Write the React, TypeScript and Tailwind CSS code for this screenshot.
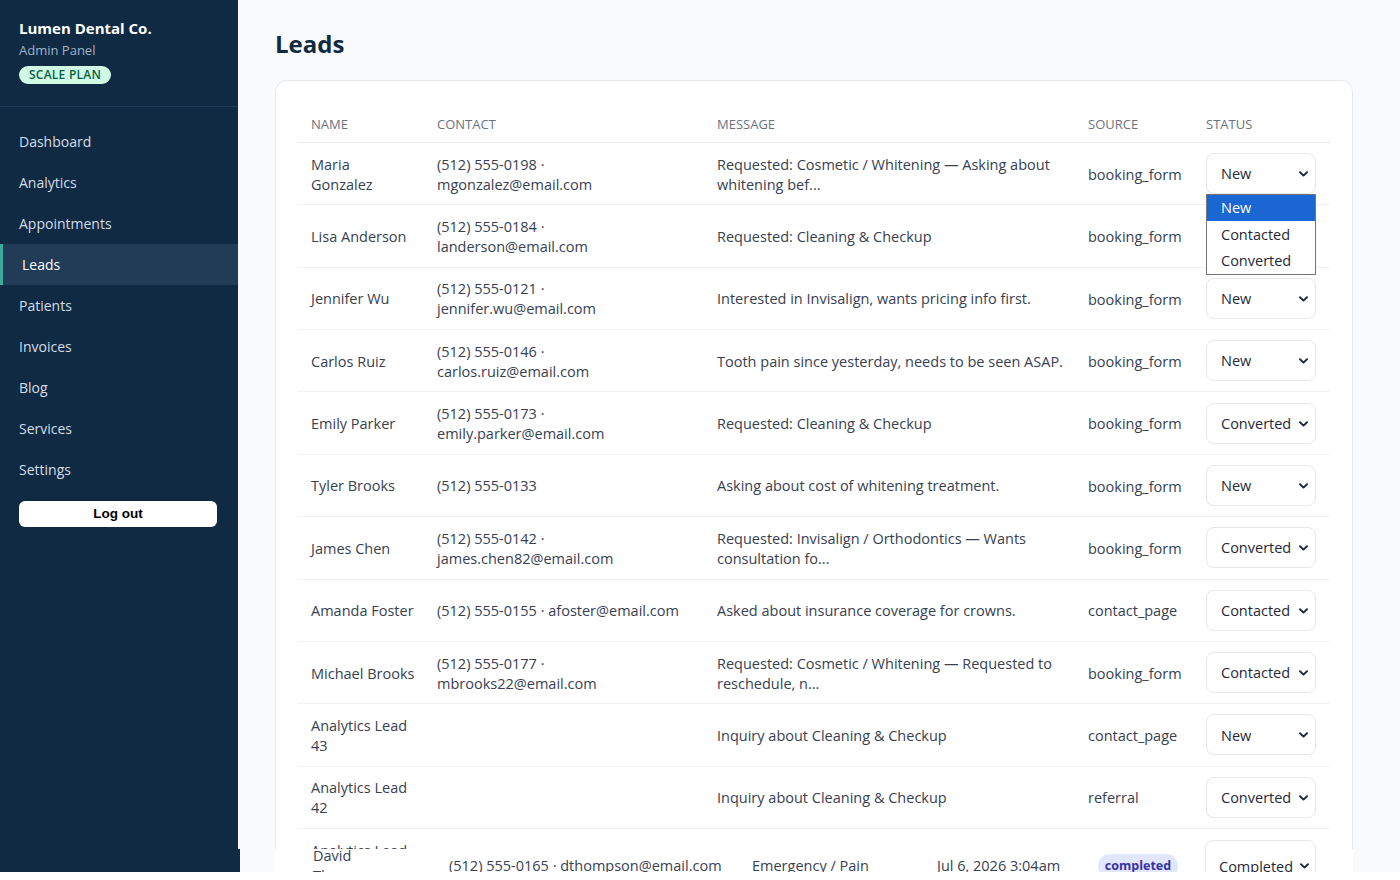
import React from "react";

type Row = {
  name: string[];
  contact: string[];
  msg: string[];
  source: string;
  status: string;
};

const rows: Row[] = [
  { name: ["Maria", "Gonzalez"], contact: ["(512) 555-0198 ·", "mgonzalez@email.com"], msg: ["Requested: Cosmetic / Whitening — Asking about", "whitening bef..."], source: "booking_form", status: "New" },
  { name: ["Lisa Anderson"], contact: ["(512) 555-0184 ·", "landerson@email.com"], msg: ["Requested: Cleaning & Checkup"], source: "booking_form", status: "New" },
  { name: ["Jennifer Wu"], contact: ["(512) 555-0121 ·", "jennifer.wu@email.com"], msg: ["Interested in Invisalign, wants pricing info first."], source: "booking_form", status: "New" },
  { name: ["Carlos Ruiz"], contact: ["(512) 555-0146 ·", "carlos.ruiz@email.com"], msg: ["Tooth pain since yesterday, needs to be seen ASAP."], source: "booking_form", status: "New" },
  { name: ["Emily Parker"], contact: ["(512) 555-0173 ·", "emily.parker@email.com"], msg: ["Requested: Cleaning & Checkup"], source: "booking_form", status: "Converted" },
  { name: ["Tyler Brooks"], contact: ["(512) 555-0133"], msg: ["Asking about cost of whitening treatment."], source: "booking_form", status: "New" },
  { name: ["James Chen"], contact: ["(512) 555-0142 ·", "james.chen82@email.com"], msg: ["Requested: Invisalign / Orthodontics — Wants", "consultation fo..."], source: "booking_form", status: "Converted" },
  { name: ["Amanda Foster"], contact: ["(512) 555-0155 · afoster@email.com"], msg: ["Asked about insurance coverage for crowns."], source: "contact_page", status: "Contacted" },
  { name: ["Michael Brooks"], contact: ["(512) 555-0177 ·", "mbrooks22@email.com"], msg: ["Requested: Cosmetic / Whitening — Requested to", "reschedule, n..."], source: "booking_form", status: "Contacted" },
  { name: ["Analytics Lead", "43"], contact: [], msg: ["Inquiry about Cleaning & Checkup"], source: "contact_page", status: "New" },
  { name: ["Analytics Lead", "42"], contact: [], msg: ["Inquiry about Cleaning & Checkup"], source: "referral", status: "Converted" },
  { name: ["Analytics Lead", "41"], contact: [], msg: ["Inquiry about Cleaning & Checkup"], source: "contact_page", status: "" },
];

const nav = ["Dashboard", "Analytics", "Appointments", "Leads", "Patients", "Invoices", "Blog", "Services", "Settings"];

function Chevron() {
  return (
    <svg width="9" height="6" viewBox="0 0 9 6" fill="none" className="shrink-0">
      <path d="M1 1.2L4.5 4.6L8 1.2" stroke="#1f2937" strokeWidth="1.9" strokeLinecap="round" strokeLinejoin="round" />
    </svg>
  );
}

function Lines({ lines }: { lines: string[] }) {
  return (
    <div className="flex flex-col">
      {lines.map((l, i) => (
        <span key={i} className="whitespace-nowrap leading-[20px]">
          {l}
        </span>
      ))}
    </div>
  );
}

function StatusSelect({ value }: { value: string }) {
  return (
    <div className="w-[110px] h-[41px] rounded-[8px] border border-[#e5e7eb] bg-white flex items-center justify-between pl-[14px] pr-[7px] pt-[1px] text-[#1f2937]">
      <span>{value}</span>
      <Chevron />
    </div>
  );
}

export default function App() {
  return (
    <div
      className="relative flex w-[1400px] h-[880px] overflow-hidden text-[14.5px]"
      style={{ fontFamily: '"Open Sans", "Noto Sans", sans-serif' }}
    >
      {/* Sidebar */}
      <aside className="w-[238px] shrink-0 bg-[#102a43] flex flex-col">
        <div className="px-[19px] pt-[18px] pb-[21px] border-b border-[#1d3a58]">
          <div className="text-white font-bold text-[15px] leading-[20px]">Lumen Dental Co.</div>
          <div className="mt-[3px] text-[#9fb3c8] text-[13px] leading-[18px]">Admin Panel</div>
          <div className="mt-[7px] inline-flex items-center h-[18px] px-[10px] rounded-full bg-[#d1fae5] text-[#065f46] text-[12px] font-semibold tracking-[0.02em]">
            SCALE PLAN
          </div>
        </div>
        <nav className="pt-[14px] flex flex-col">
          {nav.map((n) =>
            n === "Leads" ? (
              <div key={n} className="h-[41px] flex items-center pl-[19px] border-l-[3px] border-[#3fa9a0] bg-[#223b56] text-white text-[14px]">
                {n}
              </div>
            ) : (
              <div key={n} className="h-[41px] flex items-center pl-[19px] text-[#d4dde8] text-[14px]">
                {n}
              </div>
            )
          )}
        </nav>
        <div className="px-[19px] mt-[11px]">
          <button
            className="w-[198px] h-[26px] rounded-[6px] bg-white text-black font-bold text-[13.5px]"
            style={{ fontFamily: '"Liberation Sans", Arial, sans-serif' }}
          >
            Log out
          </button>
        </div>
      </aside>

      {/* Main */}
      <main className="flex-1 bg-[#f8fafc] pl-[37px] pt-[28px]">
        <h1 className="text-[24px] leading-[32px] font-bold text-[#102a43]">Leads</h1>
        <div className="mt-[20px] w-[1078px] bg-white border border-[#e6e9ee] rounded-[12px] px-[22px] pt-[24px] pb-[24px]">
          <div className="grid grid-cols-[126px_280px_371px_118px_137px] h-[38px] items-center pt-[2px] border-b border-[#e5e7eb] text-[13px] text-[#6b7280] font-medium uppercase">
            <div className="px-[13px]">Name</div>
            <div className="px-[13px]">Contact</div>
            <div className="px-[13px]">Message</div>
            <div className="px-[13px]">Source</div>
            <div className="px-[13px]">Status</div>
          </div>
          {rows.map((r, i) => (
            <div
              key={i}
              className="grid grid-cols-[126px_280px_371px_118px_137px] h-[62.36px] items-center border-b border-[#eef0f3] text-[#374151]"
            >
              <div className="px-[13px] pt-[2px]">
                <Lines lines={r.name} />
              </div>
              <div className="px-[13px] pt-[2px]">
                <Lines lines={r.contact} />
              </div>
              <div className="px-[13px] pt-[2px]">
                <Lines lines={r.msg} />
              </div>
              <div className="px-[13px] pt-[2px] whitespace-nowrap">{r.source}</div>
              <div className="px-[13px]">{r.status && <StatusSelect value={r.status} />}</div>
            </div>
          ))}
        </div>
      </main>

      {/* Open dropdown list */}
      <div className="absolute left-[1206px] top-[194px] w-[110px] border border-[#767676] bg-white text-[14.5px] text-[#1f2937] flex flex-col">
        <div className="h-[26.4px] flex items-center pl-[14px] bg-[#1a66d2] text-white">New</div>
        <div className="h-[26.4px] flex items-center pl-[14px]">Contacted</div>
        <div className="h-[26.4px] flex items-center pl-[14px]">Converted</div>
      </div>

      {/* Overlapping stale row at the bottom */}
      <div className="absolute left-0 top-[849px] w-[240px] h-[23px] bg-[#102a43]" />
      <div className="absolute left-[275px] top-[849px] w-[1078px] h-[23px] bg-white text-[14.5px] text-[#374151]">
        <div className="absolute left-[38px] -top-[3px] leading-[20px]">
          <div>David</div>
          <div>Th</div>
        </div>
        <div className="absolute left-[174px] top-[7px] leading-[20px] whitespace-nowrap">(512) 555-0165 · dthompson@email.com</div>
        <div className="absolute left-[477px] top-[7px] leading-[20px] whitespace-nowrap">Emergency / Pain</div>
        <div className="absolute left-[662px] top-[7px] leading-[20px] whitespace-nowrap">Jul 6, 2026 3:04am</div>
        <div className="absolute left-[823px] top-[5px] w-[80px] h-[24px] rounded-full bg-[#e0e7ff] text-[#3730a3] text-[12.5px] font-bold flex items-center justify-center">
          completed
        </div>
      </div>
      <div className="absolute left-[1205px] top-[840px] w-[111px] h-[44px] rounded-[8px] border border-[#e5e7eb] bg-white text-[14.5px] text-[#1f2937]">
        <div className="absolute left-[13px] top-[16px] leading-[20px]">Completed</div>
        <div className="absolute right-[6px] top-[22px]">
          <Chevron />
        </div>
      </div>
      <div className="absolute left-0 bottom-0 w-full h-[8px] bg-white" />
    </div>
  );
}
